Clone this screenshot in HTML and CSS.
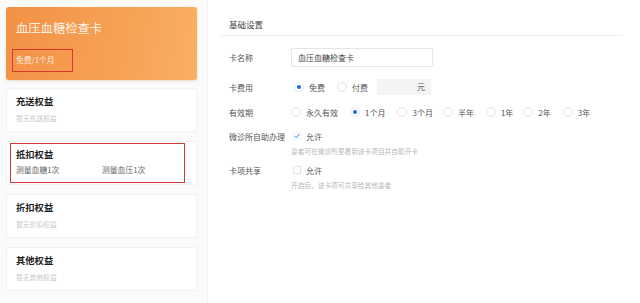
FILE: index.html
```html
<!DOCTYPE html>
<html lang="zh">
<head>
<meta charset="utf-8">
<title>血压血糖检查卡</title>
<link rel="stylesheet" href="styles.css">
</head>
<body>
<div class="page">
  <aside class="left">
    <div class="hero">
      <div class="hero-title">血压血糖检查卡</div>
      <div class="hero-sub">免费/1个月</div>
    </div>
    <div class="card">
      <div class="card-title">充送权益</div>
      <div class="card-empty">暂无充送权益</div>
    </div>
    <div class="card">
      <div class="card-title">抵扣权益</div>
      <div class="card-items"><span class="item">测量血糖1次</span><span class="item">测量血压1次</span></div>
      <div class="mark"></div>
    </div>
    <div class="card">
      <div class="card-title">折扣权益</div>
      <div class="card-empty">暂无折扣权益</div>
    </div>
    <div class="card">
      <div class="card-title">其他权益</div>
      <div class="card-empty">暂无其他权益</div>
    </div>
  </aside>
  <main class="right">
    <div class="section-head">基础设置</div>
    <div class="form">
      <div class="field f-name">
        <div class="label">卡名称</div>
        <div class="input">血压血糖检查卡</div>
      </div>
      <div class="field f-fee">
        <div class="label">卡费用</div>
        <div class="opts">
          <span class="opt o-free"><i class="radio on"></i>免费</span>
          <span class="opt o-paid"><i class="radio"></i>付费</span>
          <span class="price">元</span>
        </div>
      </div>
      <div class="field f-valid">
        <div class="label">有效期</div>
        <div class="opts">
          <span class="opt v1"><i class="radio"></i>永久有效</span>
          <span class="opt v2"><i class="radio on"></i>1个月</span>
          <span class="opt v3"><i class="radio"></i>3个月</span>
          <span class="opt v4"><i class="radio"></i>半年</span>
          <span class="opt v5"><i class="radio"></i>1年</span>
          <span class="opt v6"><i class="radio"></i>2年</span>
          <span class="opt v7"><i class="radio"></i>3年</span>
        </div>
      </div>
      <div class="field f-clinic">
        <div class="label">微诊所自助办理</div>
        <div class="opts">
          <span class="opt"><i class="check on"><svg viewBox="0 0 8 8" width="8" height="8"><path d="M1 4.3 L3.1 6.4 L7 1.4" fill="none" stroke="#2a78de" stroke-width="1.3"/></svg></i>允许</span>
        </div>
      </div>
      <div class="hint">患者可在微诊所里看到该卡项目并自助开卡</div>
      <div class="field f-share">
        <div class="label">卡项共享</div>
        <div class="opts">
          <span class="opt"><i class="check"></i>允许</span>
        </div>
      </div>
      <div class="hint">开启后，该卡项可共享给其他患者</div>
    </div>
  </main>
</div>
</body>
</html>
```
FILE: styles.css
```css
* { box-sizing: border-box; }
html, body { margin: 0; padding: 0; }
body {
  width: 640px;
  height: 303px;
  overflow: hidden;
  background: #fbfbfb;
  font-family: "Noto Sans CJK SC", "Noto Sans", sans-serif;
  color: #444;
}
.page {
  display: flex;
  height: 303px;
}
.left {
  width: 191px;
  margin-left: 6px;
  padding-top: 7px;
  display: flex;
  flex-direction: column;
}
.hero {
  height: 73px;
  border-radius: 3px;
  background: linear-gradient(100deg, #f39146 0%, #f6a255 60%, #f9b062 100%);
  padding: 14px 0 0 10px;
  box-shadow: 0 1px 2px rgba(200, 120, 50, 0.25);
}
.hero-title {
  font-size: 12.3px;
  line-height: 14px;
  color: rgba(255, 255, 255, 0.9);
}
.hero-sub {
  margin: 14px 0 0 -4px;
  width: 61px;
  height: 23px;
  border: 1.5px solid #d8392f;
  padding-left: 3px;
  font-size: 7.8px;
  line-height: 20px;
  color: rgba(255, 255, 255, 0.88);
}
.card {
  position: relative;
  height: 44px;
  margin-top: 9px;
  background: #fff;
  border: 1px solid #f2f2f2;
  border-radius: 2px;
  padding: 6px 0 0 9px;
}
.left .hero + .card { margin-top: 8px; }
.card-title {
  font-size: 9.3px;
  line-height: 12px;
  font-weight: 700;
  color: #1f1f1f;
}
.card-empty {
  margin-top: 6px;
  font-size: 6.8px;
  line-height: 10px;
  color: #c8c8c8;
}
.card-items {
  display: flex;
  margin-top: 5px;
  font-size: 7.8px;
  line-height: 10px;
  color: #666;
}
.item { width: 86px; }
.mark {
  position: absolute;
  left: 3px;
  top: 1px;
  right: 11px;
  bottom: 1px;
  border: 1.5px solid #d2383c;
}
.right {
  flex: 1;
  margin-left: 10px;
  background: #fff;
  border-left: 1px solid #f3f3f3;
}
.section-head {
  margin: 0 17px 0 12px;
  padding: 18px 0 5px 9px;
  font-size: 8.5px;
  line-height: 12px;
  color: #444;
  border-bottom: 1px solid #eeeeee;
}
.form {
  padding-left: 21px;
  display: flex;
  flex-direction: column;
}
.field {
  display: flex;
  align-items: center;
  height: 20px;
  font-size: 8px;
}
.label {
  width: 62px;
  color: #555;
  white-space: nowrap;
}
.f-name { margin-top: 11px; }
.f-fee { margin-top: 10px; }
.f-valid { margin-top: 5px; }
.f-clinic { margin-top: 4px; }
.f-share { margin-top: 4px; }
.input {
  width: 142px;
  height: 19px;
  border: 1px solid #e6e6e6;
  border-radius: 2px;
  padding-left: 6px;
  line-height: 17px;
  color: #444;
}
.opts {
  display: flex;
  align-items: center;
  color: #555;
}
.opt {
  display: flex;
  align-items: center;
  white-space: nowrap;
}
.radio {
  position: relative;
  width: 10px;
  height: 10px;
  border: 1px solid #e2e2e2;
  border-radius: 50%;
  margin-right: 5px;
}
.radio.on { border-color: #e3eaf5; }
.radio.on::after {
  content: "";
  position: absolute;
  left: 2px;
  top: 2px;
  width: 4px;
  height: 4px;
  border-radius: 50%;
  background: #1f6ed8;
}
.o-free { margin-left: 3px; }
.o-paid { margin-left: 12px; }
.price {
  margin-left: 9px;
  width: 54px;
  height: 16px;
  background: #f4f4f4;
  text-align: right;
  padding-right: 6px;
  line-height: 16px;
  color: #555;
}
.v1 { margin-left: 0; }
.v2 { margin-left: 12px; }
.v3 { margin-left: 12px; }
.v4 { margin-left: 10px; }
.v5 { margin-left: 12px; }
.v6 { margin-left: 10px; }
.v7 { margin-left: 12px; }
.check {
  display: flex;
  align-items: center;
  justify-content: center;
  width: 8px;
  height: 8px;
  border: 1px solid #e4e4e4;
  margin: 0 5px 0 2px;
}
.check.on { border-color: #eef2f8; }
.check svg { display: block; }
.hint {
  margin-left: 62px;
  height: 10px;
  font-size: 6.7px;
  line-height: 10px;
  color: #b8b8b8;
  white-space: nowrap;
}
```
